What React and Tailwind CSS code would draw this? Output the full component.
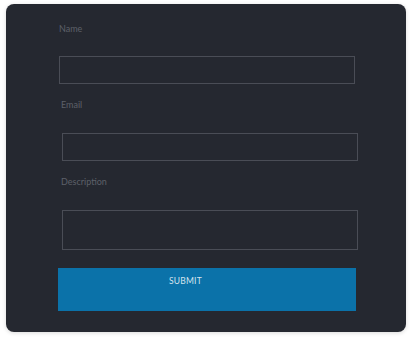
import React from "react";

function Field({label, labelClass, inputClass, multiline}) {
	return (
		<>
			<label className={`block text-[9px] leading-[10px] text-[#5d6069] ${labelClass}`}>{label}</label>
			{multiline ? (
				<textarea className={`block resize-none bg-transparent border border-[#4a4d56] outline-none ${inputClass}`}></textarea>
			) : (
				<input type="text" className={`block bg-transparent border border-[#4a4d56] outline-none ${inputClass}`} />
			)}
		</>
	);
}

export default function App() {
	return (
		<div className="w-[412px] h-[342px] bg-white pt-[4px] pl-[6px]" style={{fontFamily: "Lato, 'Open Sans', sans-serif"}}>
			<div className="w-[400px] h-[328px] rounded-lg bg-[#252830] shadow-[0_1px_4px_rgba(0,0,0,0.15)] pt-[20px]">
				<Field label="Name" labelClass="ml-[53px]" inputClass="ml-[53px] mt-[22px] w-[296px] h-[28px]" />
				<Field label="Email" labelClass="ml-[55px] mt-[16px]" inputClass="ml-[56px] mt-[23px] w-[296px] h-[28px]" />
				<Field label="Description" labelClass="ml-[55px] mt-[16px]" inputClass="ml-[56px] mt-[23px] w-[296px] h-[40px]" multiline />
				<button className="flex items-start ml-[52px] mt-[18px] w-[298px] h-[43px] bg-[#0b72a9] pl-[111px] pt-[8px]">
					<span className="block text-[8.5px] leading-[10px] text-[#d6e4ee] tracking-[0.2px]">SUBMIT</span>
				</button>
			</div>
		</div>
	);
}
